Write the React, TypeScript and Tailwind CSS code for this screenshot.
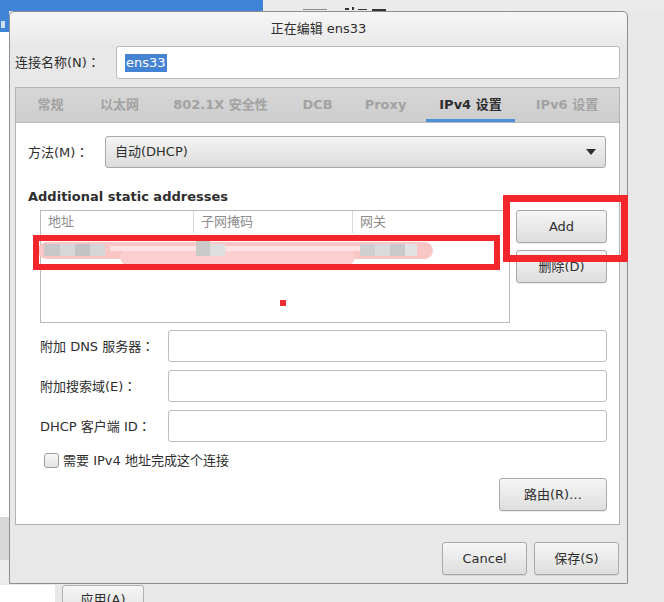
import React from "react";

const FONT = {
  fontFamily: '"DejaVu Sans", "Noto Sans CJK SC", sans-serif',
};

function Colon() {
  return <span style={{ fontFamily: '"Noto Sans CJK TC", sans-serif' }}>：</span>;
}

function Btn({ children, className = "" }: { children: React.ReactNode; className?: string }) {
  return (
    <div
      className={
        "flex items-center justify-center rounded-[3px] border border-[#a9a9a9] bg-gradient-to-b from-[#f6f6f6] to-[#dedede] text-[13px] text-[#2e2e2e] shadow-[0_1px_0_rgba(0,0,0,0.08)] " +
        className
      }
    >
      {children}
    </div>
  );
}

function Field({ label }: { label: string }) {
  return (
    <div className="flex items-center h-[32px]">
      <div className="w-[128px] text-[13px] text-[#2e2e2e] whitespace-nowrap">
        {label}
        <Colon />
      </div>
      <div className="w-[439px] h-[32px] rounded-[3px] border border-[#bdbdbd] bg-white" />
    </div>
  );
}

const tabs: { label: string; w: string }[] = [
  { label: "常规", w: "w-[51px]" },
  { label: "以太网", w: "w-[87px]" },
  { label: "802.1X 安全性", w: "w-[115px]" },
  { label: "DCB", w: "w-[79px]" },
  { label: "Proxy", w: "w-[57px]" },
];

export default function App() {
  return (
    <div className="relative w-[664px] h-[602px] overflow-hidden bg-[#e8e8e8]" style={FONT}>
      {/* background desktop pieces */}
      <div className="absolute left-0 top-0 w-[263px] h-[11px] bg-[#3f84d6]" />
      <div className="absolute left-[263px] top-0 w-[401px] h-[11px] bg-[#ebebeb]" />
      <div className="absolute left-[303px] top-[9px] w-[24px] h-[1px] bg-[#8a8a8a]" />
      <div className="absolute left-[345px] top-[8px] w-[4px] h-[2px] bg-[#333]" />
      <div className="absolute left-[352px] top-[7px] w-[2px] h-[3px] bg-[#333]" />
      <div className="absolute left-[358px] top-[9px] w-[9px] h-[1px] bg-[#333]" />
      <div className="absolute left-[372px] top-[9px] w-[14px] h-[2px] bg-[#333]" />
      <div className="absolute left-0 top-0 w-[9px] h-[32px] bg-[#3f84d6]" />
      <div className="absolute left-[1px] top-[21px] w-[4px] h-[7px] bg-[#cfe0f5]" />
      <div className="absolute left-0 top-[32px] w-[9px] h-[485px] bg-white" />
      <div className="absolute left-0 top-[517px] w-[9px] h-[43px] bg-[#d8d8d8]" />
      <div className="absolute left-0 top-[560px] w-[9px] h-[23px] bg-[#ececec]" />
      <div className="absolute left-0 top-[585px] w-[55px] h-[17px] bg-white" />
      <div className="absolute left-[62px] top-[585px] w-[82px] h-[30px] overflow-hidden rounded-[3px] border border-[#b0b0b0] bg-gradient-to-b from-[#f6f6f6] to-[#e0e0e0]">
        <div className="text-center text-[13px] leading-[13px] pt-[7px] text-[#2e2e2e]">应用(A)</div>
      </div>

      {/* dialog window */}
      <div className="absolute left-[9px] top-[11px] w-[619px] h-[573px] flex flex-col rounded-t-[5px] border border-[#8e8e8e] bg-[#e8e8e8]">
        <div className="h-[34px] shrink-0 flex items-center justify-center rounded-t-[5px] bg-gradient-to-b from-[#f6f6f6] to-[#e9e9e9] text-[13px] text-[#2e2e2e]">
          正在编辑 ens33
        </div>

        <div className="flex-1 flex flex-col pl-[5px] pr-[7px]">
          {/* connection name */}
          <div className="flex items-center h-[33px]">
            <div className="w-[101px] text-[13px] text-[#2e2e2e] whitespace-nowrap">
              连接名称(N)
              <Colon />
            </div>
            <div className="flex-1 h-[33px] rounded-[3px] border border-[#bcbcbc] bg-white flex items-center pl-[8px]">
              <span className="bg-[#4483d3] text-white text-[13px] leading-[18px] px-[1px]">ens33</span>
            </div>
          </div>

          {/* notebook */}
          <div className="mt-[8px] h-[438px] flex flex-col border border-[#b3b3b3]">
            <div className="h-[35px] shrink-0 flex items-stretch pl-[9px] bg-gradient-to-b from-[#d6d6d6] to-[#cecece] border-b border-[#b9b9b9] text-[13px] font-bold">
              {tabs.map((t) => (
                <div key={t.label} className={t.w + " flex items-center justify-center text-[#a2a2a2] whitespace-nowrap"}>
                  {t.label}
                </div>
              ))}
              <div className="w-[12px]" />
              <div className="w-[89px] flex items-center justify-center text-[#2e2e2e] whitespace-nowrap shadow-[inset_0_-3px_0_#4a8fd9]">
                IPv4 设置
              </div>
              <div className="w-[104px] flex items-center justify-center text-[#a2a2a2] whitespace-nowrap">
                IPv6 设置
              </div>
            </div>

            <div className="flex-1 bg-white flex flex-col pt-[13px] pl-[12px] pr-[12px] text-[13px] text-[#2e2e2e]">
              {/* method */}
              <div className="flex items-center h-[32px]">
                <div className="w-[77px] whitespace-nowrap">
                  方法(M)
                  <Colon />
                </div>
                <div className="w-[501px] h-[32px] rounded-[3px] border border-[#a8a8a8] bg-gradient-to-b from-[#f4f4f4] to-[#dcdcdc] flex items-center justify-between pl-[9px] pr-[9px]">
                  <span>自动(DHCP)</span>
                  <svg width="10" height="6" viewBox="0 0 10 6">
                    <path d="M0 0 L10 0 L5 6 Z" fill="#2e2e2e" />
                  </svg>
                </div>
              </div>

              <div className="mt-[21px] h-[16px] leading-[16px] font-bold whitespace-nowrap">Additional static addresses</div>

              {/* addresses */}
              <div className="mt-[5px] flex pl-[12px]">
                <div className="w-[470px] h-[113px] border border-[#b9b9b9] bg-white">
                  <div className="flex h-[22px] text-[#8c8c8c]">
                    <div className="w-[153px] border-r border-[#dadada] pl-[7px] flex items-center">地址</div>
                    <div className="w-[159px] border-r border-[#dadada] pl-[7px] flex items-center">子网掩码</div>
                    <div className="flex-1 pl-[7px] flex items-center">网关</div>
                  </div>
                </div>
                <div className="ml-[6px] flex flex-col gap-[7px]">
                  <Btn className="w-[91px] h-[33px]">Add</Btn>
                  <Btn className="w-[91px] h-[33px]">删除(D)</Btn>
                </div>
              </div>

              {/* fields */}
              <div className="mt-[7px] flex flex-col gap-[8px] pl-[12px]">
                <Field label="附加 DNS 服务器" />
                <Field label="附加搜索域(E)" />
                <Field label="DHCP 客户端 ID" />
              </div>

              <div className="mt-[11px] flex items-center pl-[16px] h-[15px]">
                <div className="w-[15px] h-[15px] rounded-[3px] border border-[#9d9d9d] bg-gradient-to-b from-[#fafafa] to-[#e2e2e2]" />
                <span className="ml-[4px] whitespace-nowrap">需要 IPv4 地址完成这个连接</span>
              </div>

              <div className="mt-[10px] flex justify-end">
                <Btn className="w-[108px] h-[33px]">路由(R)…</Btn>
              </div>
            </div>
          </div>

          {/* dialog buttons */}
          <div className="mt-[17px] flex justify-end gap-[7px] pr-[1px]">
            <Btn className="w-[85px] h-[33px]">Cancel</Btn>
            <Btn className="w-[85px] h-[33px]">保存(S)</Btn>
          </div>
        </div>
      </div>

      {/* redaction scribble */}
      <div className="absolute left-[38px] top-[242px] w-[395px] h-[17px] rounded-full bg-[#f9c6c6]" />
      <div className="absolute left-[120px] top-[250px] w-[235px] h-[15px] rounded-full bg-[#fbcfcf]" />
      <div className="absolute left-[110px] top-[246px] w-[300px] h-[5px] bg-[#fde3e3]" />
      <div className="absolute left-[44px] top-[244px] w-[16px] h-[12px] bg-[#c7c7c7]" />
      <div className="absolute left-[60px] top-[244px] w-[15px] h-[12px] bg-[#d7d7d7]" />
      <div className="absolute left-[75px] top-[244px] w-[15px] h-[12px] bg-[#c3c3c3]" />
      <div className="absolute left-[90px] top-[244px] w-[15px] h-[12px] bg-[#d5d5d5]" />
      <div className="absolute left-[196px] top-[239px] w-[14px] h-[17px] bg-[#c9c9c9]" />
      <div className="absolute left-[210px] top-[244px] w-[15px] h-[12px] bg-[#dedede]" />
      <div className="absolute left-[360px] top-[244px] w-[15px] h-[12px] bg-[#cfcfcf]" />
      <div className="absolute left-[375px] top-[244px] w-[15px] h-[12px] bg-[#dadada]" />
      <div className="absolute left-[390px] top-[244px] w-[15px] h-[12px] bg-[#c9c9c9]" />
      <div className="absolute left-[405px] top-[244px] w-[12px] h-[12px] bg-[#e2e2e2]" />

      {/* red annotations */}
      <div className="absolute left-[33px] top-[235px] w-[467px] h-[35px] border-[6px] border-[#f2262b]" />
      <div className="absolute left-[503px] top-[195px] w-[125px] h-[67px] border-[7px] border-[#f2262b]" />
      <div className="absolute left-[280px] top-[300px] w-[6px] h-[6px] bg-[#ea3036]" />
    </div>
  );
}
